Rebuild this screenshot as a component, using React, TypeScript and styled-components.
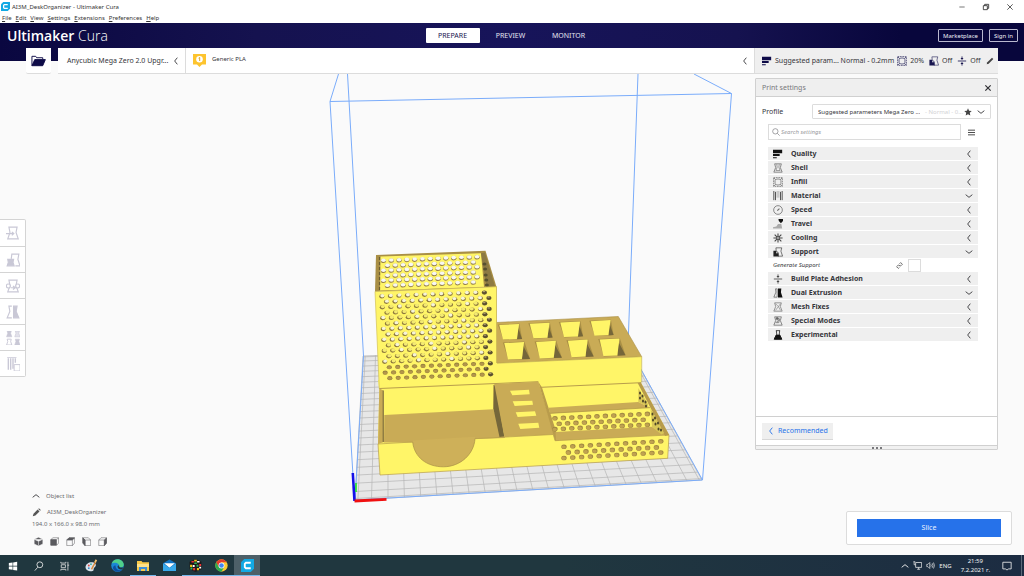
import React from "react";
import styled, { createGlobalStyle, css } from "styled-components";

const GlobalStyle = createGlobalStyle`
  *, *::before, *::after { box-sizing: border-box; }
  body { margin: 0; background: #fafafa; }
  button, input, select { font: inherit; color: inherit; margin: 0; padding: 0; border: 0; background: none; border-radius: 0; }
  button { cursor: pointer; }
  svg { display: block; flex: none; }
`;

const navy = "#17144f";
const line = "#dcdcdc";
const ink = "#35353a";
const blue = "#2672ea";

const Page = styled.div`
  display: flex;
  flex-direction: column;
  min-height: 100vh;
  background: #fafafa;
  color: ${ink};
  font: 7px/10px "Noto Sans", "Open Sans", sans-serif;
`;

/* ---------- window chrome ---------- */
const TitleBar = styled.header`
  display: flex;
  align-items: center;
  height: 13px;
  padding: 0 10px 0 1px;
  gap: 2px;
  background: #fff;
  color: #333;
  font-size: 6px;
`;
const WindowTitle = styled.span`
  flex: 1;
`;
const WindowButtons = styled.div`
  display: flex;
  gap: 16px;
`;
const WindowButton = styled.button`
  display: flex;
`;
const MenuBar = styled.nav`
  display: flex;
  gap: 4px;
  height: 10px;
  padding-left: 2px;
  background: #fff;
  font-size: 6px;
  line-height: 9px;
`;
const MenuItem = styled.button`
  display: block;
  color: #333;
  &::first-letter { text-decoration: underline; }
`;

/* ---------- stage header ---------- */
const Top = styled.div`
  background: linear-gradient(90deg, #0a0740 0%, #15124f 25%, #17145a 50%, #15124f 72%, #08063c 88%) no-repeat 0 0 / 100% 38px;
`;
const HeaderRow = styled.div`
  display: grid;
  grid-template-columns: 1fr auto 1fr;
  align-items: center;
  height: 25px;
  padding: 0 10px 0 7px;
  color: #fff;
`;
const Logo = styled.div`
  font-size: 14px;
  line-height: 20px;
  font-weight: 600;
  font-family: "Open Sans", "Noto Sans", sans-serif;
`;
const LogoThin = styled.span`
  font-weight: 300;
`;
const Tabs = styled.nav`
  display: flex;
  gap: 4px;
`;
const Tab = styled.button<{ $active?: boolean }>`
  width: 54px;
  height: 15px;
  border-radius: 1px;
  text-align: center;
  color: #e4e4f0;
  ${(p) => p.$active && css`background: #fff; color: ${navy};`}
`;
const HeaderActions = styled.div`
  display: flex;
  justify-content: flex-end;
  gap: 6px;
  margin-right: -4px;
`;
const OutlineButton = styled.button`
  height: 13px;
  padding: 0 4px;
  border: 1px solid #b9b8cf;
  border-radius: 1px;
  color: #f0f0f8;
  font-size: 6px;
  line-height: 10px;
`;
const StageRow = styled.div`
  display: flex;
  gap: 7px;
  height: 26px;
  margin: 0 26px;
`;
const FolderButton = styled.button`
  display: flex;
  align-items: center;
  justify-content: center;
  width: 25px;
  background: #fff;
  border-bottom: 1px solid ${line};
  border-radius: 0 0 2px 2px;
`;
const StageBar = styled.div`
  display: flex;
  flex: 1;
  background: #fff;
  border-bottom: 1px solid ${line};
`;
const StageButton = styled.button`
  display: flex;
  align-items: center;
  border-right: 1px solid ${line};
  text-align: left;
`;
const PrinterButton = styled(StageButton)`
  width: 128px;
  padding: 0 5px 0 9px;
  justify-content: space-between;
`;
const MaterialButton = styled(StageButton)`
  flex: 1;
  gap: 6px;
  padding: 0 5px 0 7px;
`;
const MaterialName = styled.span`
  flex: 1;
  font-size: 6px;
  margin-bottom: 4px;
`;
const SettingsSummary = styled(StageButton)`
  width: 243px;
  padding: 0 6px 0 7px;
  gap: 3px;
  background: #efefef;
  border-right: 0;
`;
const SummaryProfile = styled.span`
  flex: 1;
  white-space: nowrap;
`;
const SummaryValue = styled.span`
  margin-right: 2px;
`;

/* ---------- workspace ---------- */
const Workspace = styled.main`
  position: relative;
  display: flex;
  justify-content: space-between;
  flex: 1;
`;
const Scene = styled.svg`
  position: absolute;
  inset: 0;
  width: 100%;
  height: 100%;
`;
const LeftColumn = styled.div`
  position: relative;
  display: flex;
  flex-direction: column;
  justify-content: space-between;
  padding: 145px 0 9px;
`;
const ToolBar = styled.div`
  width: 26px;
  border: 1px solid #d4d4d4;
  border-left: 0;
  border-radius: 0 2px 2px 0;
  background: #fff;
`;
const ToolButton = styled.button`
  display: flex;
  align-items: center;
  justify-content: center;
  width: 100%;
  height: 26px;
  & + & { border-top: 1px solid #d4d4d4; }
`;
const ObjectInfo = styled.section`
  padding-left: 32px;
  color: #6a6a6e;
  font-size: 6px;
  line-height: 9px;
`;
const InfoButton = styled.button`
  display: flex;
  align-items: center;
  gap: 6px;
  height: 16px;
`;
const Dimensions = styled.div``;
const ViewButtons = styled.div`
  display: flex;
  gap: 4px;
  padding-top: 8px;
`;
const ViewButton = styled.button`
  display: flex;
  justify-content: center;
  width: 12px;
`;

const RightColumn = styled.div`
  position: relative;
  display: flex;
  flex-direction: column;
  align-items: flex-end;
  gap: 61px;
  padding: 4px 12px 10px 0;
`;
const Panel = styled.section`
  display: flex;
  flex-direction: column;
  flex: 1;
  width: 243px;
  margin-right: 14px;
  background: #fff;
  border: 1px solid #d0d0d0;
  border-radius: 1px;
`;
const PanelHeader = styled.div`
  display: flex;
  align-items: center;
  justify-content: space-between;
  height: 18px;
  padding: 0 5px 0 6px;
  background: #efefef;
  border-bottom: 1px solid #d0d0d0;
  color: #77777b;
`;
const IconButton = styled.button`
  display: flex;
`;
const ProfileRow = styled.div`
  display: flex;
  align-items: center;
  justify-content: space-between;
  padding: 7px 6px 5px;
`;
const SelectBox = styled.div`
  display: flex;
  align-items: center;
  width: 179px;
  height: 15px;
  padding: 0 5px;
  gap: 5px;
  border: 1px solid ${line};
  border-radius: 1px;
  font-size: 6px;
`;
const ProfileSelect = styled.select`
  appearance: none;
  width: 102px;
  height: 12px;
  outline: 0;
`;
const Muted = styled.span`
  flex: 1;
  width: 0;
  color: #d2d2d4;
  white-space: nowrap;
`;
const SearchRow = styled.div`
  display: flex;
  align-items: center;
  gap: 7px;
  padding: 0 12px;
`;
const SearchBox = styled.label`
  display: flex;
  align-items: center;
  gap: 1px;
  width: 193px;
  height: 16px;
  padding: 0 3px;
  border: 1px solid ${line};
`;
const SearchInput = styled.input`
  flex: 1;
  min-width: 0;
  outline: 0;
  font-size: 6px;
  font-style: italic;
  &::placeholder { color: #9a9a9e; opacity: 1; }
`;
const Categories = styled.div`
  display: flex;
  flex-direction: column;
  flex: 1;
  gap: 1px;
  padding: 7px 19px 0 12px;
`;
const Category = styled.button`
  display: flex;
  align-items: center;
  gap: 8px;
  height: 13px;
  padding: 0 5px;
  background: #efefef;
  text-align: left;
  font-weight: 700;
`;
const CategoryName = styled.span`
  flex: 1;
`;
const SettingRow = styled.div`
  display: flex;
  align-items: center;
  gap: 5px;
  height: 12px;
  padding: 0 57px 0 5px;
  font-size: 6px;
  font-style: italic;
`;
const SettingLabel = styled.label`
  flex: 1;
`;
const CheckBox = styled.input`
  appearance: none;
  width: 13px;
  height: 13px;
  border: 1px solid ${line};
  background: #fff;
`;
const PanelFooter = styled.div`
  padding: 6px 6px 5px;
  border-top: 1px solid #d0d0d0;
`;
const Recommended = styled.button`
  display: flex;
  align-items: center;
  gap: 3px;
  height: 17px;
  padding: 0 5px;
  background: #efefef;
  border-bottom: 1px solid #d8d8d8;
  color: ${blue};
`;
const ResizeHandle = styled.div`
  display: flex;
  align-items: center;
  justify-content: center;
  gap: 2px;
  height: 4px;
  background: #f1f1f1;
  border-top: 1px solid #d0d0d0;
`;
const Dot = styled.i`
  width: 2px;
  height: 2px;
  background: #77777b;
`;
const SliceCard = styled.div`
  width: 166px;
  padding: 7px 10px;
  background: #fff;
  border: 1px solid ${line};
  border-radius: 2px;
`;
const SliceButton = styled.button`
  display: block;
  width: 100%;
  height: 18px;
  background: ${blue};
  color: #e9f1ff;
  text-align: center;
`;

/* ---------- desktop task bar ---------- */
const TaskBar = styled.footer`
  display: flex;
  justify-content: space-between;
  height: 21px;
  background: linear-gradient(90deg, #20373f 0%, #20373f 55%, #1c2c42 100%);
  color: #f2f2f2;
`;
const TaskGroup = styled.div`
  display: flex;
`;
const TaskButton = styled.button<{ $open?: boolean; $active?: boolean }>`
  display: flex;
  align-items: center;
  justify-content: center;
  width: 26px;
  border-top: 1px solid transparent;
  border-bottom: 1px solid transparent;
  ${(p) => p.$open && css`border-bottom-color: #76b9ed;`}
  ${(p) => p.$active && css`background: #4d6068; border-top-color: #4d6068;`}
`;
const Tray = styled.div`
  display: flex;
  align-items: center;
  gap: 4px;
  padding-right: 2px;
  font-size: 6px;
`;
const Clock = styled.time`
  padding: 0 8px 0 5px;
  text-align: center;
  line-height: 9px;
`;
const ShowDesktop = styled.button`
  width: 1px;
  height: 21px;
  margin-left: 5px;
  background: #5b6a7a;
`;

/* ---------- icons ---------- */
type IconProps = { size?: number; color?: string; children: React.ReactNode; box?: number };
const Icon = ({ size = 10, box = 12, color = "#303034", children }: IconProps) => (
  <svg width={size} height={size} viewBox={`0 0 ${box} ${box}`} fill="none" stroke={color} strokeWidth="1" aria-hidden="true">
    {children}
  </svg>
);
const Chevron = ({ dir, size = 8, color = "#3c3c40" }: { dir: "left" | "down" | "up"; size?: number; color?: string }) => (
  <Icon size={size} color={color}>
    <path strokeWidth="1.4" d={dir === "left" ? "M8 1 4 6l4 5" : dir === "down" ? "M1 4l5 4 5-4" : "M1 8l5-4 5 4"} />
  </Icon>
);
const body = "M2.500 1h7L8.600 5.500 10.500 11h-9L3.400 5.500z";
const QualityIcon = ({ color = "#111", size = 10 }) => (
  <Icon color={color} size={size}>
    <path fill={color} stroke="none" d="M0 1h11v4H0zM0 6h8v2.500H0zM0 10h4.500v1.200H0z" />
  </Icon>
);
const InfillIcon = ({ color = "#555", size = 10 }) => (
  <Icon color={color} size={size}>
    <path strokeWidth=".8" strokeDasharray="2 .8" d="M.8.8h10.400v10.400H.8z" />
    <path strokeWidth=".7" d="M4.300 2.500h3.400L9.500 4.300v3.400L7.700 9.500H4.300L2.500 7.700V4.300zM1 1l2.500 2.500M11 1 8.500 3.500M1 11l2.500-2.500M11 11 8.500 8.500" />
  </Icon>
);
const SupportIcon = ({ color = "#222", size = 10 }) => (
  <Icon color={color} size={size}>
    <path strokeWidth=".7" d="M3.500 1h7L9.500 5l2 6H6V6H4z" />
    <path fill={color} stroke="none" d="M.5 4.500h3.200v3h3v4H.5z" />
  </Icon>
);
const AdhesionIcon = ({ color = "#444", size = 10 }) => (
  <Icon color={color} size={size}>
    <path d="M1 6h10M6 .5v3M6 11.500v-3" />
    <path fill={color} stroke="none" d="M4.200 2.500h3.600L6 4.800zM4.200 9.500h3.600L6 7.200z" />
  </Icon>
);
const categoryIcons: Record<string, React.ReactNode> = {
  quality: <QualityIcon />,
  shell: <Icon color="#666"><path strokeWidth=".9" d="M2 1h8L8.800 5.500 11 11H1l2.200-5.500z" /><path d="M4.500 1.500 5 5 3.500 9h5L7 5l.5-3.500" strokeWidth=".7" /></Icon>,
  infill: <InfillIcon />,
  material: <Icon color="#555"><path d="M1 0v11M3 1v10M9 1v10M11 0v11" strokeWidth="1.200" /><path d="M5 0v8M7 0v8" strokeWidth=".8" stroke="#999" /></Icon>,
  speed: <Icon color="#666"><circle cx="6" cy="6" r="5.200" strokeWidth=".9" /><path d="m5.200 6.800 2.500-2.500" strokeWidth="1.300" /></Icon>,
  travel: <Icon><path fill="#111" stroke="none" d="M6.500 0H12v2.500L9.500 5 7 2.500z" /><path fill="#aaa" stroke="none" d="M0 11.500V10l4-1 2-3h4l1 5.500z" /></Icon>,
  cooling: <Icon color="#444"><path strokeWidth="1.300" d="M6 .5v11M.5 6h11M2 2l8 8M10 2l-8 8" /><circle cx="6" cy="6" r="1.600" fill="#efefef" /></Icon>,
  support: <SupportIcon />,
  adhesion: <AdhesionIcon />,
  dual: <Icon color="#555"><path strokeWidth=".8" d="M5 1H3l.5 4L1 11h4z" /><path fill="#111" stroke="none" d="M6 .5h4L9.500 5l2 6.500H6z" /></Icon>,
  mesh: <Icon color="#777"><path strokeWidth=".9" d="M2 1h8L8.800 5.500 11 11H1l2.200-5.500z" /><path strokeWidth=".7" d="m3 2 3.500 3.500L3 10m6-8-2.500 3.500L9 10" /></Icon>,
  special: <Icon color="#666"><path strokeWidth=".9" d="M2 1h8L8.800 5.500 11 11H1l2.200-5.500z" /><path strokeWidth=".8" d="M4 3h3v3H5v2M8 3l-1 5H3" /><path fill="#666" d="M4 2h2v2H4z" /></Icon>,
  experimental: <Icon color="#111"><path strokeWidth=".9" d="M3.500.8h5M4 1l.5 4L1.500 11h9L7.500 5 8 1" /><path fill="#111" d="M4 6h4l2.500 5h-9z" /></Icon>,
};

const toolInk = "#c9c8d6";
const tools = [
  { name: "Move", art: <><path d={body} /><path d="M0 6.500h6.500M5 5l1.700 1.500L5 8" /></> },
  { name: "Scale", art: <><path d="M4.500 5 5 1h6l-.8 4.500 1.800 5.500H8" /><path fill={toolInk} d="M1.500 5.500h5L6 8l1 3H1l1-3z" /></> },
  { name: "Rotate", art: <><path d={body} /><circle cx="2" cy="6" r="1.700" fill="#fff" /><circle cx="10" cy="6" r="1.700" fill="#fff" /><path d="M4 7.500h3.500M6 6l2 1.500L6 9" /></> },
  { name: "Mirror", art: <><path d="M5 1H2.500l.8 4.500L1 11h4" /><path fill={toolInk} d="M6.500 1h3l-.8 4.500L11 11H6.500z" /></> },
  { name: "Per model settings", art: <><path fill={toolInk} strokeWidth=".5" d="M1 0h3.500L4 2l1 3H.5l1-3zM8 7h3.500L11 9l1 3H7.500l1-3z" /><path fill="#e2e1ea" strokeWidth=".5" d="M8 0h3.500L11 2l1 3H7.500l1-3z" /><path strokeWidth=".8" d="M1 7h3.500L4 9l1 3H.5l1-3z" /></> },
  { name: "Support blocker", art: <><path d="M1 0h8M2 1v10M4 1v10M6 1v9M8 1v4" strokeWidth="1.200" /><path fill="#fff" strokeWidth=".8" d="M7 6.500h5V12H7z" /></> },
];

const categories: { name: string; icon: string; open?: boolean }[] = [
  { name: "Quality", icon: "quality" },
  { name: "Shell", icon: "shell" },
  { name: "Infill", icon: "infill" },
  { name: "Material", icon: "material", open: true },
  { name: "Speed", icon: "speed" },
  { name: "Travel", icon: "travel" },
  { name: "Cooling", icon: "cooling" },
  { name: "Support", icon: "support", open: true },
  { name: "Build Plate Adhesion", icon: "adhesion" },
  { name: "Dual Extrusion", icon: "dual", open: true },
  { name: "Mesh Fixes", icon: "mesh" },
  { name: "Special Modes", icon: "special" },
  { name: "Experimental", icon: "experimental" },
];

const cubeFill = "#5a5a5e";
const views = [
  { name: "3D view", art: <path fill={cubeFill} stroke="#fafafa" strokeWidth=".7" d="M6 .2 11.800 3v6.300L6 12 .2 9.300V3zM.2 3 6 5.700 11.800 3M6 5.700v6" /> },
  { name: "Front view", art: <><path d="m1 3.500 3-2.500h7.500v7L9 11M9 3.500 11.500 1" strokeWidth=".7" /><path fill={cubeFill} d="M1 3.500h7.500V11H1z" /></> },
  { name: "Top view", art: <><path d="M1 4v7.500h7.500V4M8.500 11.500 11.500 8V1" strokeWidth=".7" /><path fill={cubeFill} d="M1 4 4 1h7.500l-3 3z" /></> },
  { name: "Left view", art: <><path d="M4 4h7.500v7.500H4zM4 4 1 1h7.500l3 3" strokeWidth=".7" /><path fill={cubeFill} d="m1 1 3 3v7.500L1 8z" /></> },
  { name: "Right view", art: <><path d="M1 4h7.500v7.500H1zM1 4l3-3h7.500" strokeWidth=".7" /><path fill={cubeFill} d="m8.500 4 3-3v7l-3 3.500z" /></> },
];

const CuraMark = ({ size }: { size: number }) => (
  <Icon size={size}>
    <path fill="#12a9e4" stroke="none" d="M3 0h9v9L9 12H0V3z" />
    <path stroke="#fff" strokeWidth="1.700" d="M9 3.500H4.500L3.500 4.500v3l1 1H9" />
  </Icon>
);

/* ---------- 3D scene ---------- */
type P = [number, number];
const pts = (list: P[]) => list.map((p) => p.join(",")).join(" ");

/* Maps the unit square onto the build plate as the camera sees it. */
const plate: P[] = [[355, 500], [702, 480], [628, 346], [363, 356]];
const project = (u: number, v: number): P => {
  const [[x0, y0], [x1, y1], [x2, y2], [x3, y3]] = plate;
  const dx1 = x1 - x2, dx2 = x3 - x2, sx = x0 - x1 + x2 - x3;
  const dy1 = y1 - y2, dy2 = y3 - y2, sy = y0 - y1 + y2 - y3;
  const d = dx1 * dy2 - dx2 * dy1;
  const g = (sx * dy2 - dx2 * sy) / d;
  const h = (dx1 * sy - sx * dy1) / d;
  const w = g * u + h * v + 1;
  return [
    ((x1 - x0 + g * x1) * u + (x3 - x0 + h * x3) * v + x0) / w,
    ((y1 - y0 + g * y1) * u + (y3 - y0 + h * y3) * v + y0) / w,
  ];
};
const cells = 22;
const gridStops = Array.from({ length: cells + 1 }, (_, i) => i / cells);
const edgeStops = [0.008, 0.992];

const Y = "#fff568";
const B = "#c9ab56";
const D = "#75663a";
const E = "#a98f45";

const BackHoles = () => (
  <g>
    {Array.from({ length: 6 }, (_, r) =>
      Array.from({ length: 13 }, (_, c) => {
        const x = 383.5 + (r % 2) * 4 + c * 7.8;
        const y = 260.5 + r * 5 - c * 0.3;
        return x > 481 ? null : (
          <g key={`${r}-${c}`}>
            <ellipse cx={x} cy={y + 0.5} rx="2.700" ry="2.100" fill="#98834a" />
            <ellipse cx={x} cy={y - 0.2} rx="2.400" ry="1.800" fill="#f7f7f2" />
          </g>
        );
      })
    )}
  </g>
);

const FrontHoles = () => (
  <g>
    {Array.from({ length: 16 }, (_, r) =>
      Array.from({ length: 13 }, (_, c) => {
        const x = 381.8 + (r % 2) * 4.4 + c * (8.55 - r * 0.01) + r * 0.24;
        const y = 296.4 + r * 5.45 - c * 0.32;
        const last = c === 12;
        const solid = r > 12;
        const upper = r === 0 || r === 1 || (r > 5 && r < 9);
        return (
          <g key={`${r}-${c}`}>
            <ellipse cx={x} cy={y} rx="2.600" ry="2.100" fill={last ? "#5c5130" : solid ? "#96803f" : "#8c773d"} />
            {solid && !last && <ellipse cx={x} cy={y + 0.2} rx="2" ry="1.500" fill="#b3964a" />}
            {!last && !solid && (
              <ellipse cx={x + (c < 6 ? 0.5 : -0.4)} cy={y - 0.7} rx="2" ry="1.700" fill={upper || (r * 3 + c) % 4 === 0 ? "#f6f4d8" : "#f4ea72"} />
            )}
            {last && <ellipse cx={x - 0.4} cy={y - 1} rx="1.300" ry=".7" fill="#b0a070" />}
          </g>
        );
      })
    )}
  </g>
);

const HoleRows = ({ x, y, dx, dy, rowGap, n }: { x: number; y: number; dx: number; dy: number; rowGap: number; n: number }) => (
  <g>
    {[0, 1, 2].map((r) =>
      Array.from({ length: n - (r % 2) }, (_, c) => {
        const cx = x + (r % 2) * (dx / 2) + c * dx;
        const cy = y + r * rowGap - c * dy;
        return (
          <g key={`${r}-${c}`}>
            <ellipse cx={cx} cy={cy} rx="2.700" ry="2.300" fill="#a08843" />
            <ellipse cx={cx - 0.3} cy={cy + 0.3} rx="2.100" ry="1.700" fill="#c0a250" />
          </g>
        );
      })
    )}
  </g>
);

const Pocket = ({ x, y, w, h, lean }: { x: number; y: number; w: number; h: number; lean: number }) => (
  <g>
    <polygon fill={E} points={pts([[x - 0.7, y], [x + w + 0.3, y - 1], [x + w + lean, y + h - 0.7], [x + 5, y + h + 0.4]])} />
    <polygon fill={D} points={pts([[x + w - 1, y + 3], [x + w + lean, y + h - 0.7], [x + w - 2, y + h - 0.3]])} />
    <polygon fill={Y} points={pts([[x + 0.8, y + 0.5], [x + w, y - 0.6], [x + w - 2.2, y + h - 0.6], [x + 4.5, y + h]])} />
  </g>
);

const Organizer = () => (
  <g>
    {/* pocket block */}
    <polygon fill={B} stroke={E} strokeWidth=".6" points="496,322.500 618.300,316.500 641.700,356.700 496,363.300" />
    {[0, 1, 2, 3].map((i) => <Pocket key={i} x={498.5 + i * 30.5} y={324.6 - i * 1.3} w={20.6} h={15} lean={3} />)}
    {[0, 1, 2, 3].map((i) => <Pocket key={i} x={503.5 + i * 31.8} y={342.6 - i * 1.2} w={20.6} h={17} lean={6} />)}
    <polygon fill={Y} points="378,380 496,363.300 641.700,356.700 641,383 541,388 379.300,390" />
    <path d="M496 363.300 641.700 356.700v26" fill="none" stroke="#c8b452" strokeWidth=".7" />

    {/* tower */}
    <polygon fill={E} points="376,255 485.500,250.800 496.500,287 375,291.500" />
    <polygon fill={Y} points="380.500,256.500 481,253.300 484,287 380,290.500" />
    <BackHoles />
    <polygon fill="#8d7a43" points="481,253.300 485,252.500 495,286.500 486.500,287" />
    <g fill="#57502f">
      {[264, 269, 275, 280, 285].map((y, i) => <ellipse key={y} cx={484.5 + i * 0.6} cy={y} rx="2" ry="1.500" />)}
    </g>
    <path d="M379.500 257v33" stroke="#6b5d33" strokeWidth="1.200" strokeDasharray="3 2" />
    <polygon fill={Y} points="375,291.500 496.500,286.700 497,375 379.300,389" />
    <path d="M375 291.500 496.500 286.700V363" fill="none" stroke="#c8b452" strokeWidth=".8" />
    <path d="M375 291.500 379.300 389" stroke="#d3c156" strokeWidth=".7" />
    <FrontHoles />

    {/* tray body */}
    <polygon fill={Y} points="379.300,388.500 538,381.700 641,382.700 669,435 667.700,458.300 380,475 378,444" />
    <polygon fill={B} points="379.300,388.500 383.500,390.500 384,442 378,444" />
    <path d="M379.300 388.500 538.300 381.700M541 387.300 641 382.700" stroke="#b89d4c" strokeWidth="1" />
    <path d="M383.200 390.500v51.500" stroke={D} strokeWidth="1" />
    <polygon fill={B} points="384.300,415 493.300,409.300 505,438 475,439 412.700,442.500 384,442.500" />
    <polygon fill={E} points="493.300,385 495.500,384.500 497,410 493.300,409.300" />
    <polygon fill={D} points="494,386 495.500,385 504.500,436.500 499.500,437 493.500,409" />
    <path fill="#ceb059" d="M412.700 440.500v1.500c1.500 15 14 25 31 24.800S474 454 475 438.700v-2z" />
    <path d="M412.700 442c1.500 15 14 25 31 24.800S474 454 475 438.700" fill="none" stroke={E} strokeWidth=".7" />

    {/* slotted block */}
    <polygon fill={B} points="494.300,384 538.300,381.700 554.300,434.500 504.300,437" />
    <polygon fill="#b99c4c" points="538.300,381.700 542,387.500 559,440.500 555,440.700 553.300,434.500" />
    <g fill={Y}>
      <polygon points="510,390.700 529,389.700 529.700,394.300 512.300,395.300" />
      <polygon points="512.700,401.300 532.300,400.800 533,404.700 514.700,406" />
      <polygon points="515.700,412.300 535,411.300 536.300,415.700 517.700,417" />
      <polygon points="518.300,423.700 538.300,422.700 539.300,427.700 520.300,429" />
    </g>

    {/* right compartments */}
    <polygon fill={B} points="548.300,407.700 638.300,402 650,407.500 550,413.500" />
    <polygon fill={B} points="555.500,432 651.700,426.700 667,435 556,440.700" />
    <path d="M550 413.300 650 407.700" stroke={E} strokeWidth=".7" />
    <HoleRows x={555} y={418.3} dx={8.4} dy={0.4} rowGap={5.4} n={12} />
    <polygon fill="#b89b4b" points="637.700,383 641,382.700 669.300,435 665,436" />
    <polygon fill="#d9c758" points="638.300,388 648,404 648,407 638.300,402" />
    <polygon fill="#d9c758" points="650.500,408.500 664,433 661.500,434.500 652,427" />
    <g fill="#4f4728">
      {([[640, 393], [640, 398], [642.5, 396], [643, 401], [645.5, 402], [646, 406], [652.5, 414], [653, 420], [655, 418], [655.5, 424], [658, 423], [658.5, 429], [661, 430]] as P[]).map(([x, y]) => (
        <ellipse key={`${x}-${y}`} cx={x} cy={y} rx="1" ry="1.600" />
      ))}
    </g>
    <HoleRows x={564} y={446.8} dx={8.8} dy={0.5} rowGap={5.6} n={12} />
    <path d="M378 444 412.700 442M475 438.700 553.300 434.500l1.700 6.200L669 435l-1.300 23.300L380 475 378 444" fill="none" stroke="#b89d4c" strokeWidth=".7" />
  </g>
);

const seg = (a: P, b: P) => `M${a[0].toFixed(1)} ${a[1].toFixed(1)}L${b[0].toFixed(1)} ${b[1].toFixed(1)}`;

const BuildVolume = () => (
  <Scene viewBox="0 74 1024 481" preserveAspectRatio="xMidYMid slice" role="img" aria-label="Desk organizer on the build plate">
    <polygon fill="#e7e7e7" points={pts(plate)} />
    <path
      fill="none"
      stroke="#b5b5b5"
      strokeWidth=".7"
      d={[...gridStops, ...edgeStops].map((t) => seg(project(t, 0), project(t, 1)) + seg(project(0, t), project(1, t))).join("")}
    />
    <g fill="none" stroke="#7aacfa" strokeWidth="1">
      <path d="M338.500 74 330 101.500 731.500 93.500 694 74M330 101.500 354.500 500 702.500 480 731.500 93.500" />
      <path d="M347.500 74 363.500 356 355 500M638 74 628 346M628 346 702.500 480" />
    </g>
    <Organizer />
    <path d="M352.800 473 354.500 501" stroke="#1410e8" strokeWidth="2.600" />
    <path d="M356 483v9" stroke="#18e818" strokeWidth="1.500" />
    <path d="M354.500 501 386.500 499.300" stroke="#f01010" strokeWidth="2.800" />
  </Scene>
);

export default function App() {
  return (
    <Page>
      <GlobalStyle />
      <TitleBar>
        <CuraMark size={9} />
        <WindowTitle>AI3M_DeskOrganizer - Ultimaker Cura</WindowTitle>
        <WindowButtons>
          <WindowButton aria-label="Minimize"><Icon size={8} color="#333"><path d="M2 6h8" /></Icon></WindowButton>
          <WindowButton aria-label="Restore"><Icon size={8} color="#222"><path strokeWidth="1.200" d="M2 4h6v6H2zM4 4V2h6v6H8" /></Icon></WindowButton>
          <WindowButton aria-label="Close"><Icon size={8} color="#222"><path strokeWidth="1.100" d="m2 2 8 8M10 2l-8 8" /></Icon></WindowButton>
        </WindowButtons>
      </TitleBar>
      <MenuBar>
        {["File", "Edit", "View", "Settings", "Extensions", "Preferences", "Help"].map((m) => <MenuItem key={m}>{m}</MenuItem>)}
      </MenuBar>

      <Top>
        <HeaderRow>
          <Logo>Ultimaker <LogoThin>Cura</LogoThin></Logo>
          <Tabs>
            <Tab $active>PREPARE</Tab>
            <Tab>PREVIEW</Tab>
            <Tab>MONITOR</Tab>
          </Tabs>
          <HeaderActions>
            <OutlineButton>Marketplace</OutlineButton>
            <OutlineButton>Sign in</OutlineButton>
          </HeaderActions>
        </HeaderRow>
        <StageRow>
          <FolderButton aria-label="Open file">
            <svg width="15" height="12" viewBox="0 0 16 12" fill="none" stroke="#0e0b48" aria-hidden="true">
              <path d="M1 11V1h4l1 1.500h6.500V4" />
              <path fill="#0e0b48" d="M4 4.500h11.300L12.500 11H1z" />
            </svg>
          </FolderButton>
          <StageBar>
            <PrinterButton>
              Anycubic Mega Zero 2.0 Upgr...
              <Chevron dir="left" />
            </PrinterButton>
            <MaterialButton>
              <svg width="13" height="13" viewBox="0 0 13 13" aria-hidden="true">
                <path fill="#fdc42e" d="M0 0h13v10.500H9L6.500 13 4 10.500H0z" />
                <circle cx="6.500" cy="5.200" r="3.300" fill="#fff" />
                <path d="M5.600 4.200 6.700 3.500v3.500" fill="none" stroke="#d59a10" strokeWidth=".9" />
              </svg>
              <MaterialName>Generic PLA</MaterialName>
              <Chevron dir="left" />
            </MaterialButton>
            <SettingsSummary>
              <QualityIcon color="#0e0b48" />
              <SummaryProfile>Suggested param... Normal - 0.2mm</SummaryProfile>
              <InfillIcon color={navy} />
              <SummaryValue>20%</SummaryValue>
              <SupportIcon color={navy} />
              <SummaryValue>Off</SummaryValue>
              <AdhesionIcon color={navy} />
              <SummaryValue>Off</SummaryValue>
              <Icon size={8}><path fill="#444" stroke="none" d="M1 11l1-3 7-7 2 2-7 7z" /></Icon>
            </SettingsSummary>
          </StageBar>
        </StageRow>
      </Top>

      <Workspace>
        <BuildVolume />
        <LeftColumn>
          <ToolBar>
            {tools.map((t) => (
              <ToolButton key={t.name} aria-label={t.name}>
                <Icon size={14} color={toolInk}>{t.art}</Icon>
              </ToolButton>
            ))}
          </ToolBar>
          <ObjectInfo>
            <InfoButton><Chevron dir="up" />Object list</InfoButton>
            <InfoButton>
              <Icon size={9}><path fill="#555" stroke="none" d="M1 11l1-3.500L7.500 2 10 4.500 4.500 10zM8.300 1.200l1-.9 2.400 2.400-.9 1z" /></Icon>
              AI3M_DeskOrganizer
            </InfoButton>
            <Dimensions>194.0 x 166.0 x 98.0 mm</Dimensions>
            <ViewButtons>
              {views.map((v) => (
                <ViewButton key={v.name} aria-label={v.name}><Icon size={9} color={cubeFill}>{v.art}</Icon></ViewButton>
              ))}
            </ViewButtons>
          </ObjectInfo>
        </LeftColumn>

        <RightColumn>
          <Panel>
            <PanelHeader>
              Print settings
              <IconButton aria-label="Close print settings"><Icon size={8}><path strokeWidth="1.800" d="m2 2 8 8M10 2l-8 8" /></Icon></IconButton>
            </PanelHeader>
            <ProfileRow>
              <label htmlFor="profile">Profile</label>
              <SelectBox>
                <ProfileSelect id="profile">
                  <option>Suggested parameters Mega Zero ...</option>
                </ProfileSelect>
                <Muted>- Normal - 0...</Muted>
                <Icon size={8}><path fill="#444" stroke="none" d="m6 .5 1.600 3.700 4 .4-3 2.700.9 4L6 9.200l-3.500 2.100.9-4-3-2.700 4-.4z" /></Icon>
                <Chevron dir="down" />
              </SelectBox>
            </ProfileRow>
            <SearchRow>
              <SearchBox>
                <Icon size={8} color="#77777b"><circle cx="5" cy="5" r="4" /><path d="m8 8 3.500 3.500" /></Icon>
                <SearchInput placeholder="Search settings" aria-label="Search settings" />
              </SearchBox>
              <IconButton aria-label="Setting visibility">
                <Icon size={7} color="#333"><path strokeWidth="1.500" d="M0 2h12M0 6h12M0 10h12" /></Icon>
              </IconButton>
            </SearchRow>
            <Categories>
              {categories.map((c) => (
                <React.Fragment key={c.name}>
                  <Category aria-expanded={!!c.open}>
                    {categoryIcons[c.icon]}
                    <CategoryName>{c.name}</CategoryName>
                    <Chevron dir={c.open ? "down" : "left"} />
                  </Category>
                  {c.name === "Support" && (
                    <SettingRow>
                      <SettingLabel htmlFor="generate-support">Generate Support</SettingLabel>
                      <Icon size={7} color="#555"><path strokeWidth="1.400" d="m5 7 2-2M6 3l2-2 3 3-2 2-2 1M6 9l-2 2-3-3 2-2 2-1" /></Icon>
                      <CheckBox id="generate-support" type="checkbox" />
                    </SettingRow>
                  )}
                </React.Fragment>
              ))}
            </Categories>
            <PanelFooter>
              <Recommended><Chevron dir="left" color={blue} />Recommended</Recommended>
            </PanelFooter>
            <ResizeHandle><Dot /><Dot /><Dot /></ResizeHandle>
          </Panel>
          <SliceCard><SliceButton>Slice</SliceButton></SliceCard>
        </RightColumn>
      </Workspace>

      <TaskBar>
        <TaskGroup>
          <TaskButton aria-label="Start"><Icon size={10}><path fill="#fff" stroke="none" d="M1 2.500 5.500 1.800v4H1zM6.200 1.700 11 1v4.800H6.200zM1 6.500h4.500v4L1 9.800zM6.200 6.500H11v5l-4.800-.8z" /></Icon></TaskButton>
          <TaskButton aria-label="Search"><Icon size={10} color="#eee"><circle cx="7" cy="4.500" r="3.500" /><path d="M4.500 7.500 1 11.500" /></Icon></TaskButton>
          <TaskButton aria-label="Task view"><Icon size={10} color="#ddd"><path d="M1.500 4.500h5v3.500h-5zM1 1v1.500h6V1M1 11.500V10h6v1.500M9.500 1v10.500M9 5h2" /></Icon></TaskButton>
          <TaskButton aria-label="Paint">
            <Icon size={13}>
              <path fill="#d9e4ec" stroke="none" d="M.5 7.500C.5 4.500 4 2.500 7 3s4 3 2 4.500 0 2.500-2 3.500S.5 10.500.5 7.500z" />
              <circle cx="3.500" cy="6" r=".9" fill="#d44" stroke="none" /><circle cx="5.500" cy="4.800" r=".8" fill="#3a9" stroke="none" /><circle cx="3.500" cy="8.500" r=".8" fill="#38c" stroke="none" />
              <path d="M6 9.500 9.800 2.500" stroke="#d98a3a" strokeWidth="1.300" /><path d="m9.300 3 1.200-2.300" stroke="#f3c070" strokeWidth="1.600" />
            </Icon>
          </TaskButton>
          <TaskButton aria-label="Edge">
            <Icon size={13}>
              <circle cx="6" cy="6" r="5.800" fill="#1b86d6" stroke="none" />
              <path fill="#4fd08a" stroke="none" d="M.8 4C2 1 4 .2 6 .2c3.500 0 5.800 2.500 5.800 5C11.800 7 10 8 8 7.500 8 5 6 3.500 4 3.500 2.500 3.500 1.200 4 .8 4z" />
              <path fill="#0f4f9e" stroke="none" d="M4.300 6c-.5 3 2 5 5.700 4.200C7.500 12.500 3 12 2 9c-.5-2 .8-3.500 2.300-3z" />
              <path fill="#20373f" stroke="none" d="M7 5.500c0 2 2 3 4.500 2L10.500 9.500c-2 .8-4.500-.5-4.500-2.500z" />
            </Icon>
          </TaskButton>
          <TaskButton $open aria-label="File Explorer"><Icon size={12}><path fill="#f7c948" stroke="none" d="M0 1h4.500l1 1.300H12V11H0z" /><path fill="#fde28a" stroke="none" d="M0 4h12v3H0z" /><path fill="#3f8fd6" stroke="none" d="M2 7h8v4H8V9H4v2H2z" /></Icon></TaskButton>
          <TaskButton aria-label="Mail"><Icon size={13}><path fill="#1173c4" stroke="none" d="M0 4 6 .5 12 4v7H0z" /><path fill="#fff" stroke="none" d="M1 4h10L6 8z" /><path fill="#38a9ec" stroke="none" d="m0 4.200 6 4 6-4V11H0z" /></Icon></TaskButton>
          <TaskButton $open aria-label="Cube">
            <Icon size={13}>
              <path fill="#1b1b1b" stroke="none" d="M6 0 11.500 2.500v7L6 12 .5 9.500v-7z" />
              <g stroke="none">
                <path fill="#f5c518" d="M4.800.6h2.400v1.600H4.800zM1 5.300h1.900v2H1zM7.300 8.300h1.900v2H7.300z" />
                <path fill="#e33" d="M2.300 1.800h2.200v1.500H2.300zM3.800 8.300h1.900v2H3.800zM9.400 4.600h1.800v1.900H9.400z" />
                <path fill="#fff" d="M7.500 1.800h2.200v1.500H7.500zM3.400 5.500h1.800v1.800H3.400zM9.400 7.100h1.800v1.700H9.400z" />
                <path fill="#3b5" d="M4.900 3.200h2.300v1.500H4.900zM1.300 7.900h1.900v1.700H1.300zM6.900 5.400h1.800v1.800H6.900z" />
              </g>
            </Icon>
          </TaskButton>
          <TaskButton $open aria-label="Chrome">
            <Icon size={13}>
              <g stroke="none">
                <circle cx="6" cy="6" r="5.700" fill="#fcc934" />
                <path fill="#e33b2e" d="M1.100 3.100A5.700 5.700 0 0 1 10.900 3.100H6L3.500 7.400z" />
                <path fill="#2da94f" d="M1.100 3.100 3.600 7.500 8.400 7.400 6 11.700A5.700 5.700 0 0 1 1.100 3.100z" />
                <circle cx="6" cy="6" r="2.700" fill="#fff" /><circle cx="6" cy="6" r="2.100" fill="#4285f4" />
              </g>
            </Icon>
          </TaskButton>
          <TaskButton $open $active aria-label="Cura"><CuraMark size={13} /></TaskButton>
        </TaskGroup>
        <Tray>
          <Chevron dir="up" color="#eee" />
          <Icon size={9} color="#eee"><path d="M3.500 2h8v6.500h-8zM5.500 11h4M7.500 8.500V11M1.500 1v4h2M.5 1h2.500" /></Icon>
          <Icon size={9} color="#eee"><path d="M1 4.500h1.500L5 2v8L2.500 7.500H1zM6.500 4.500q1 1.500 0 3M8.300 3q2 3 0 6M10 2q2.500 4 0 8" strokeWidth=".9" /></Icon>
          <span>ENG</span>
          <Clock>21:59<br />7.2.2021 г.</Clock>
          <Icon size={10} color="#eee"><path d="M1 1.500h10v8H7.500L6 11 4.500 9.500H1z" /></Icon>
          <ShowDesktop aria-label="Show desktop" />
        </Tray>
      </TaskBar>
    </Page>
  );
}
